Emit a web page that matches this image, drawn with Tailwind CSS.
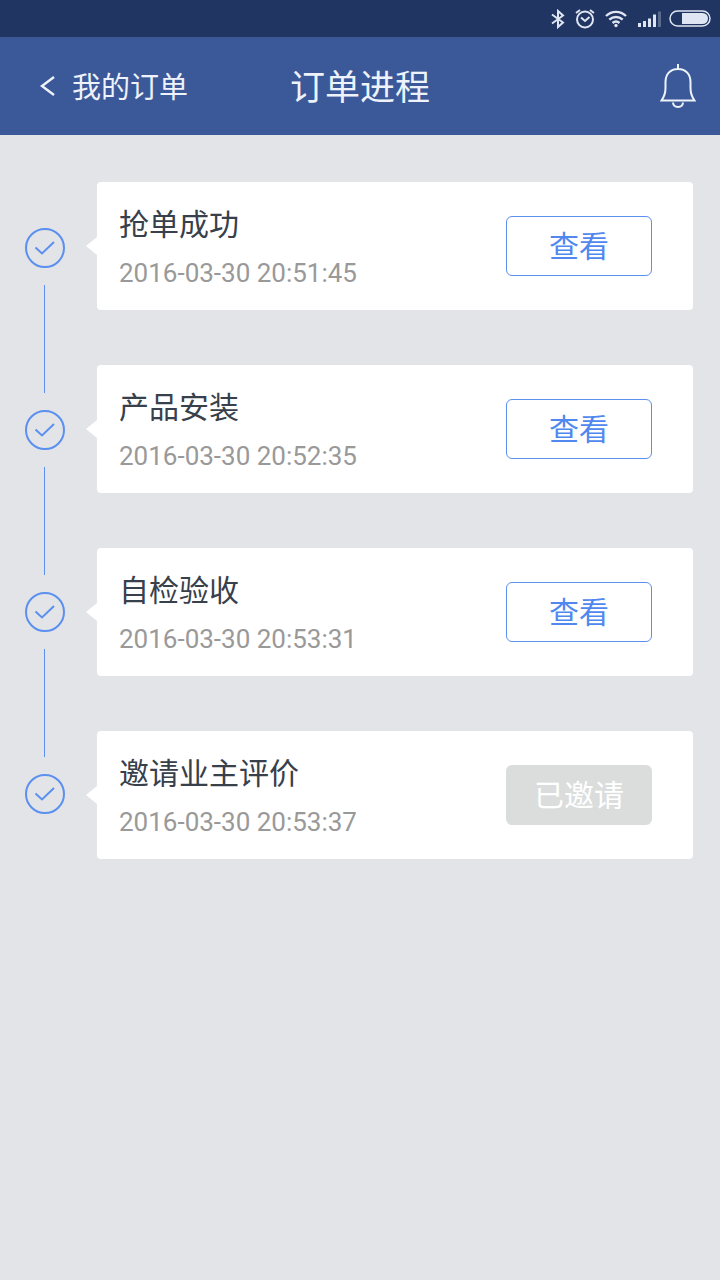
<!DOCTYPE html>
<html lang="zh-CN">
<head>
    <meta charset="UTF-8">
    <meta name="viewport" content="width=device-width, initial-scale=1.0">
    <title>订单进程</title>
    <!-- Tailwind CSS CDN -->
    <script src="https://cdn.jsdelivr.net/npm/@tailwindcss/browser@4"></script>
</head>
<body class="min-h-screen bg-[#e2e4e7] font-['Roboto','Noto_Sans_CJK_SC',sans-serif] antialiased">

    <!-- Status bar -->
    <div class="flex h-[37px] items-center justify-end bg-[#203562] pr-[9px] text-[#dfe5f2]">
        <svg class="mr-2.5 h-5 w-3.5" viewBox="0 0 14 20" fill="none" stroke="currentColor" stroke-width="2" role="img" aria-label="蓝牙">
            <path d="M1 5.500l11 8-5 4.500V2l5 4.500-11 8"/>
        </svg>
        <svg class="mr-2.5 h-5 w-5" viewBox="0 0 20 20" fill="none" stroke="currentColor" stroke-width="2" role="img" aria-label="闹钟">
            <circle cx="10" cy="10.500" r="8"/>
            <path d="M6 8.500L10 12l4.500-4M1 4L5 1M19 4L15 1"/>
        </svg>
        <svg class="mr-2.5 h-5 w-[22px]" viewBox="0 0 22 20" fill="none" stroke="currentColor" stroke-width="2.4" role="img" aria-label="无线网络">
            <path d="M1 7c5.800-5.500 14.200-5.500 20 0M4.300 10.700c4-3.700 9.400-3.700 13.400 0M7.500 14c2.200-1.800 4.800-1.800 7 0"/>
            <circle cx="11" cy="16.500" r="1.700" fill="currentColor" stroke="none"/>
        </svg>
        <svg class="mr-2 h-5 w-6" viewBox="0 0 24 20" fill="currentColor" role="img" aria-label="信号">
            <path d="M1 14h3v4H1zM6 12h3v6H6zM11 9.500h3V18h-3zM16 5.500h3V18h-3z"/>
            <path d="M21 2.500h3V18h-3z" opacity=".3"/>
        </svg>
        <svg class="h-5 w-[42px]" viewBox="0 0 42 20" fill="none" role="img" aria-label="电池">
            <rect x="1" y="2" width="40" height="15" rx="7.500" stroke="currentColor" stroke-width="1.500"/>
            <path d="M13 4h20.500a5.500 5.500 0 0 1 0 11H13z" fill="currentColor"/>
        </svg>
    </div>

    <!-- Header -->
    <header class="grid h-[98px] grid-cols-[1fr_auto_1fr] items-center bg-[#3b5998] px-6 text-[#eef3fb]">
        <a href="#" class="flex items-center gap-4 pl-4 text-[29px] leading-10">
            <svg class="h-5 w-4" viewBox="0 0 16 20" fill="none" stroke="currentColor" stroke-width="2.4" aria-hidden="true">
                <path d="M14 1L2 10l12 9"/>
            </svg>
            <span class="pt-1">我的订单</span>
        </a>
        <h1 class="pt-1.5 text-[35px] leading-10">订单进程</h1>
        <button type="button" class="justify-self-end" aria-label="通知">
            <svg class="h-11 w-9" viewBox="0 0 36 44" fill="none" stroke="currentColor" stroke-width="2">
                <path d="M18 0v5M18 5C10 5 5.500 10.500 5.500 18v6c0 5-1.500 9-4 12.500h33c-2.500-3.500-4-7.500-4-12.500v-6C30.500 10.500 26 5 18 5z"/>
                <path d="M13 38.500c.5 6 9.500 6 10 0"/>
            </svg>
        </button>
    </header>

    <main class="flex gap-8 pr-[27px] pl-[25px]">
        <!-- Timeline rail -->
        <div class="flex shrink-0 flex-col gap-[17px] pt-[93px] text-[#5b8ff0]" aria-hidden="true">
            <svg class="size-10" viewBox="0 0 40 40" fill="none" stroke="currentColor" stroke-width="2">
                <circle cx="20" cy="20" r="19"/>
                <path d="M10.500 19.500l6.500 6L29 14"/>
            </svg>
            <div class="ml-[19px] h-[108px] w-px bg-[#5b8ff0]"></div>
            <svg class="size-10" viewBox="0 0 40 40" fill="none" stroke="currentColor" stroke-width="2">
                <circle cx="20" cy="20" r="19"/>
                <path d="M10.500 19.500l6.500 6L29 14"/>
            </svg>
            <div class="ml-[19px] h-[108px] w-px bg-[#5b8ff0]"></div>
            <svg class="size-10" viewBox="0 0 40 40" fill="none" stroke="currentColor" stroke-width="2">
                <circle cx="20" cy="20" r="19"/>
                <path d="M10.500 19.500l6.500 6L29 14"/>
            </svg>
            <div class="ml-[19px] h-[108px] w-px bg-[#5b8ff0]"></div>
            <svg class="size-10" viewBox="0 0 40 40" fill="none" stroke="currentColor" stroke-width="2">
                <circle cx="20" cy="20" r="19"/>
                <path d="M10.500 19.500l6.500 6L29 14"/>
            </svg>
        </div>

        <!-- Order steps -->
        <ol class="flex grow flex-col gap-[55px] pt-[47px]">
            <li class="relative flex items-center justify-between rounded bg-white pt-[19px] pr-[41px] pb-[13px] pl-[22px]">
                <svg class="absolute top-1/2 right-full h-[18px] w-[11px] -translate-y-1/2 fill-white" viewBox="0 0 11 18" aria-hidden="true"><path d="M11 0v18L0 9z"/></svg>
                <div>
                    <h2 class="text-[30px] leading-12 text-[#37404b]">抢单成功</h2>
                    <time class="block text-[26px] leading-12 text-[#999999]" datetime="2016-03-30T20:51:45">2016-03-30 20:51:45</time>
                </div>
                <button type="button" class="-mt-1.5 h-[60px] w-[146px] rounded-md border border-[#5b8ff0] text-[30px] text-[#5088f0]">查看</button>
            </li>
            <li class="relative flex items-center justify-between rounded bg-white pt-[19px] pr-[41px] pb-[13px] pl-[22px]">
                <svg class="absolute top-1/2 right-full h-[18px] w-[11px] -translate-y-1/2 fill-white" viewBox="0 0 11 18" aria-hidden="true"><path d="M11 0v18L0 9z"/></svg>
                <div>
                    <h2 class="text-[30px] leading-12 text-[#37404b]">产品安装</h2>
                    <time class="block text-[26px] leading-12 text-[#999999]" datetime="2016-03-30T20:52:35">2016-03-30 20:52:35</time>
                </div>
                <button type="button" class="-mt-1.5 h-[60px] w-[146px] rounded-md border border-[#5b8ff0] text-[30px] text-[#5088f0]">查看</button>
            </li>
            <li class="relative flex items-center justify-between rounded bg-white pt-[19px] pr-[41px] pb-[13px] pl-[22px]">
                <svg class="absolute top-1/2 right-full h-[18px] w-[11px] -translate-y-1/2 fill-white" viewBox="0 0 11 18" aria-hidden="true"><path d="M11 0v18L0 9z"/></svg>
                <div>
                    <h2 class="text-[30px] leading-12 text-[#37404b]">自检验收</h2>
                    <time class="block text-[26px] leading-12 text-[#999999]" datetime="2016-03-30T20:53:31">2016-03-30 20:53:31</time>
                </div>
                <button type="button" class="-mt-1.5 h-[60px] w-[146px] rounded-md border border-[#5b8ff0] text-[30px] text-[#5088f0]">查看</button>
            </li>
            <li class="relative flex items-center justify-between rounded bg-white pt-[19px] pr-[41px] pb-[13px] pl-[22px]">
                <svg class="absolute top-1/2 right-full h-[18px] w-[11px] -translate-y-1/2 fill-white" viewBox="0 0 11 18" aria-hidden="true"><path d="M11 0v18L0 9z"/></svg>
                <div>
                    <h2 class="text-[30px] leading-12 text-[#37404b]">邀请业主评价</h2>
                    <time class="block text-[26px] leading-12 text-[#999999]" datetime="2016-03-30T20:53:37">2016-03-30 20:53:37</time>
                </div>
                <button type="button" disabled class="-mt-1.5 h-[60px] w-[146px] rounded-md bg-[#dbdddd] text-[30px] text-white">已邀请</button>
            </li>
        </ol>
    </main>
</body>
</html>
